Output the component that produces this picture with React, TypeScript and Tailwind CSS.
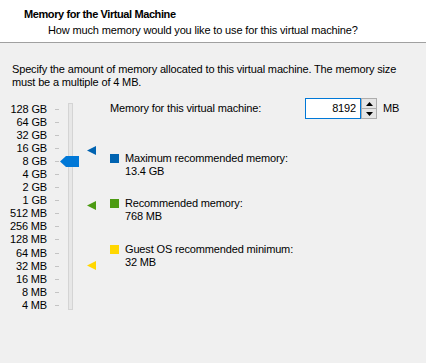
import React from "react";

const levels = [
  "128 GB", "64 GB", "32 GB", "16 GB", "8 GB", "4 GB", "2 GB", "1 GB",
  "512 MB", "256 MB", "128 MB", "64 MB", "32 MB", "16 MB", "8 MB", "4 MB",
];

function Tri({ color, top }: { color: string; top: number }) {
  return (
    <svg
      className="absolute left-[87px]"
      style={{ top }}
      width="9"
      height="9"
      viewBox="0 0 9 9"
    >
      <polygon points="0,4.5 9,0 9,9" fill={color} />
    </svg>
  );
}

function Legend({ color, title, value, className }: { color: string; title: string; value: string; className?: string }) {
  return (
    <div className={"flex items-start " + (className ?? "")}>
      <div className="w-[9px] h-[9px] mt-[2px] shrink-0" style={{ backgroundColor: color }} />
      <div className="ml-[6px] leading-[13px]">
        <div>{title}</div>
        <div>{value}</div>
      </div>
    </div>
  );
}

export default function App() {
  return (
    <div
      className="w-[426px] h-[363px] bg-[#f0f0f0] text-black text-[11px] tracking-[-0.15px] overflow-hidden"
      style={{ fontFamily: '"Liberation Sans", Arial, sans-serif' }}
    >
      <div className="h-[43px] bg-white border-b border-[#a0a0a0]">
        <div className="pl-[24px] pt-[7px] font-bold leading-[14px] text-[11px] tracking-[-0.4px]">
          Memory for the Virtual Machine
        </div>
        <div className="pl-[48px] pt-[3px] leading-[13px]">
          How much memory would you like to use for this virtual machine?
        </div>
      </div>
      <div className="pl-[12px] pt-[20px] leading-[13px]">
        <div>Specify the amount of memory allocated to this virtual machine. The memory size</div>
        <div>must be a multiple of 4 MB.</div>
      </div>
      <div className="flex">
        <div className="relative w-[110px] flex pt-[13.5px]">
          <div className="flex flex-col">
            {levels.map((l) => (
              <div key={l} className="h-[13.1px] flex items-center">
                <div className="w-[47px] text-right leading-[13px]">{l}</div>
                <div className="ml-[8px] w-[4px] h-px bg-[#c4c4c4]" />
              </div>
            ))}
          </div>
          <div className="ml-[9px] mt-[0.5px] mb-[2px] w-[5px] bg-[#e7e7e7] border border-[#d4d4d4]" />
          <svg className="absolute left-[60px] top-[67px]" width="19" height="11" viewBox="0 0 19 11">
            <polygon points="0,5.5 6,0 19,0 19,11 6,11" fill="#0078d7" />
          </svg>
          <Tri color="#0063b1" top={57} />
          <Tri color="#4c9a12" top={112} />
          <Tri color="#ffd700" top={172} />
        </div>
        <div className="flex flex-col pt-[9px]">
          <div className="flex items-center h-[21px]">
            <div className="w-[195px] leading-[13px]">Memory for this virtual machine:</div>
            <div className="w-[56px] h-[21px] bg-white border border-[#0078d7] flex items-center justify-end pr-[4px]">
              8192
            </div>
            <div className="w-[16px] h-[21px] flex flex-col">
              <div className="flex-1 border border-[#adadad] bg-[#e5e5e5] flex items-center justify-center">
                <svg width="7" height="4" viewBox="0 0 7 4"><polygon points="3.5,0 7,4 0,4" fill="#000" /></svg>
              </div>
              <div className="flex-1 border border-t-0 border-[#adadad] bg-[#e5e5e5] flex items-center justify-center">
                <svg width="7" height="4" viewBox="0 0 7 4"><polygon points="0,0 7,0 3.5,4" fill="#000" /></svg>
              </div>
            </div>
            <div className="ml-[6px]">MB</div>
          </div>
          <Legend className="mt-[33px]" color="#0063b1" title="Maximum recommended memory:" value="13.4 GB" />
          <Legend className="mt-[19px]" color="#4c9a12" title="Recommended memory:" value="768 MB" />
          <Legend className="mt-[20px]" color="#ffd700" title="Guest OS recommended minimum:" value="32 MB" />
        </div>
      </div>
    </div>
  );
}
